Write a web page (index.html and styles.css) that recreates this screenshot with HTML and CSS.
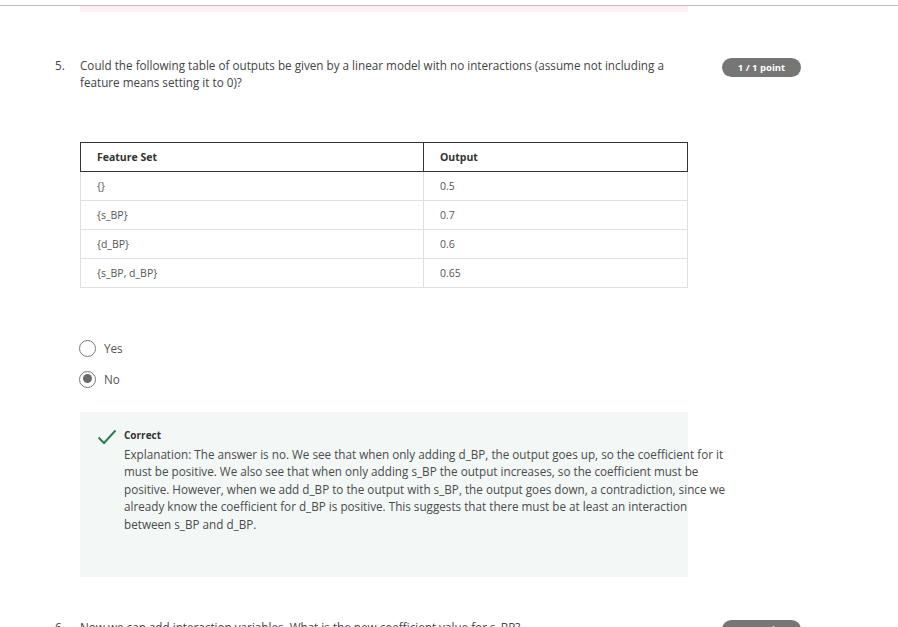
FILE: index.html
```html
<!DOCTYPE html>
<html>
<head>
<meta charset="utf-8">
<link rel="stylesheet" href="styles.css">
</head>
<body>
<div class="topline"></div>
<div class="prev-feedback"></div>

<section class="question">
  <div class="q-head">
    <span class="q-num">5.</span>
    <p class="q-text">Could the following table of outputs be given by a linear model with no interactions (assume not including a<br>feature means setting it to 0)?</p>
    <span class="badge">1 / 1 point</span>
  </div>

  <table class="data">
    <thead>
      <tr><th class="c1">Feature Set</th><th>Output</th></tr>
    </thead>
    <tbody>
      <tr><td>{}</td><td>0.5</td></tr>
      <tr><td>{s_BP}</td><td>0.7</td></tr>
      <tr><td>{d_BP}</td><td>0.6</td></tr>
      <tr><td>{s_BP, d_BP}</td><td>0.65</td></tr>
    </tbody>
  </table>

  <div class="options">
    <label class="opt"><span class="radio"></span><span>Yes</span></label>
    <label class="opt"><span class="radio checked"></span><span>No</span></label>
  </div>

  <div class="feedback">
    <svg class="check" width="20" height="16" viewBox="0 0 20 16"><path d="M1.5 8.5 L7 14 L18.5 1.5" fill="none" stroke="#2d7a57" stroke-width="2"/></svg>
    <div class="fb-body">
      <div class="fb-title">Correct</div>
      <p class="fb-text">Explanation: The answer is no. We see that when only adding d_BP, the output goes up, so the coefficient for it<br>must be positive. We also see that when only adding s_BP the output increases, so the coefficient must be<br>positive. However, when we add d_BP to the output with s_BP, the output goes down, a contradiction, since we<br>already know the coefficient for d_BP is positive. This suggests that there must be at least an interaction<br>between s_BP and d_BP.</p>
    </div>
  </div>
</section>

<section class="question next">
  <div class="q-head">
    <span class="q-num">6.</span>
    <p class="q-text">Now we can add interaction variables. What is the new coefficient value for s_BP?</p>
    <span class="badge">1 / 1 point</span>
  </div>
</section>
</body>
</html>
```

FILE: styles.css
```css
html, body {
  margin: 0;
  padding: 0;
  background: #fff;
  overflow: hidden;
}
body {
  font-family: "Open Sans", "Liberation Sans", sans-serif;
  color: #333;
  width: 898px;
  height: 627px;
}
.topline {
  margin-top: 5px;
  height: 1px;
  background: #bdbdbd;
}
.prev-feedback {
  margin-left: 80px;
  width: 608px;
  height: 6px;
  background: #fdf1f3;
}
.question {
  padding-left: 55px;
}
.q-head {
  display: flex;
  align-items: flex-start;
  margin-top: 45px;
}
.q-num {
  width: 25px;
  font-size: 11.7px;
  line-height: 17px;
  color: #444;
}
.q-text {
  margin: 0;
  width: 642px;
  font-size: 11.7px;
  line-height: 17px;
  color: #444;
}
.badge {
  margin-top: 1px;
  width: 79px;
  height: 19px;
  border-radius: 10px;
  background: #767676;
  color: #fff;
  font-size: 9.5px;
  font-weight: 700;
  line-height: 19px;
  text-align: center;
}
.data {
  margin: 51px 0 0 25px;
  width: 608px;
  border-collapse: collapse;
  font-size: 10.5px;
}
.data th, .data td {
  text-align: left;
  padding: 0 0 0 16px;
  height: 28px;
  border: 1px solid #e0e0e0;
}
.data th {
  border: 1px solid #333;
  font-weight: 700;
  color: #333;
}
.data th.c1, .data tr td:first-child {
  width: 326px;
}
.data td {
  color: #555;
}
.options {
  margin: 51px 0 0 24px;
  display: flex;
  flex-direction: column;
  gap: 13px;
}
.opt {
  display: flex;
  align-items: center;
  gap: 8px;
  font-size: 11.7px;
  color: #555;
  height: 18px;
}
.radio {
  box-sizing: border-box;
  width: 17px;
  height: 17px;
  border-radius: 50%;
  border: 1.5px solid #777;
  position: relative;
}
.radio.checked::after {
  content: "";
  position: absolute;
  left: 2.5px;
  top: 2.5px;
  width: 9px;
  height: 9px;
  border-radius: 50%;
  background: #6a6a6a;
}
.feedback {
  margin: 24px 0 0 25px;
  width: 608px;
  height: 165px;
  box-sizing: border-box;
  background: #f3f8f7;
  display: flex;
  padding: 17px 0 0 17px;
}
.check {
  flex: none;
}
.fb-body {
  margin-left: 7px;
  flex: 1;
  min-width: 0;
}
.fb-title {
  font-size: 10px;
  font-weight: 700;
  color: #333;
  line-height: 14px;
  margin-top: -1px;
}
.fb-text {
  margin: 4px 0 0;
  font-size: 11.7px;
  line-height: 17.4px;
  color: #4a4a4a;
  white-space: nowrap;
}
.next .q-head {
  margin-top: 42px;
}
```
